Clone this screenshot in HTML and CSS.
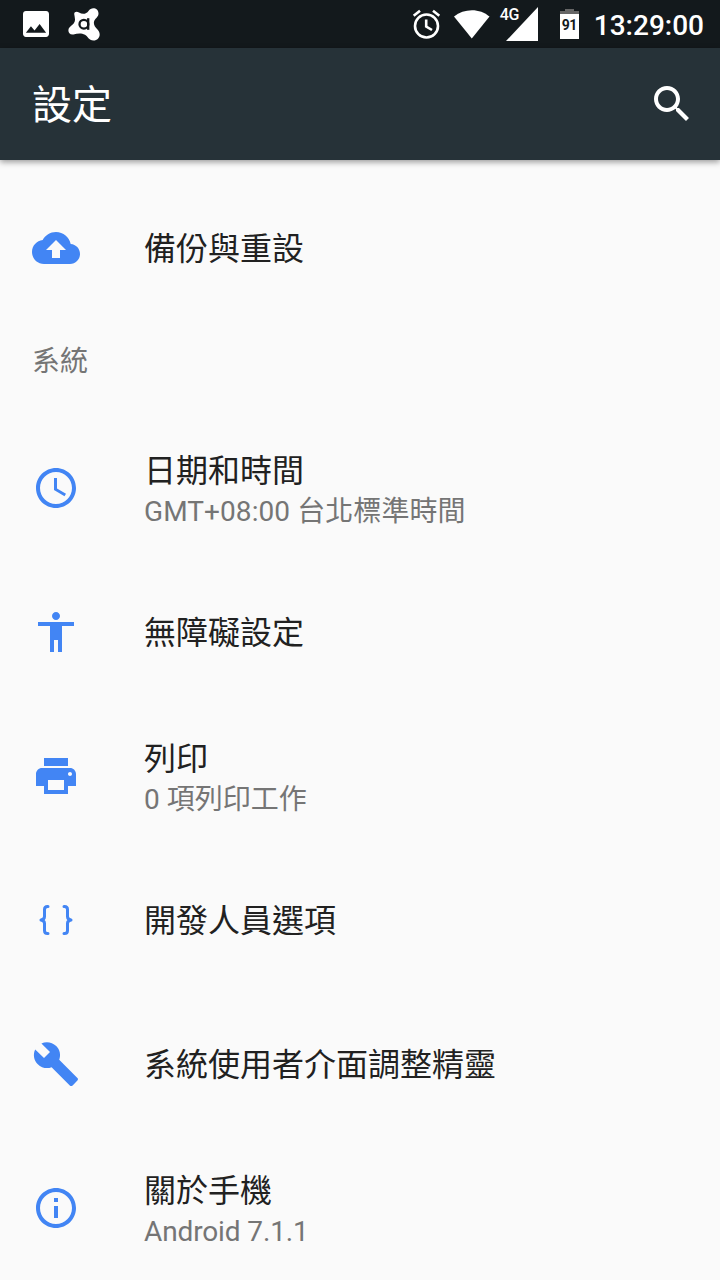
FILE: index.html
```html
<!DOCTYPE html>
<html lang="zh-Hant">
<head>
<meta charset="utf-8">
<title>設定</title>
<link rel="stylesheet" href="styles.css">
</head>
<body>
<div class="screen">
  <div class="status-bar">
    <svg class="status-photo" width="26" height="26" viewBox="3 3 18 18"><path d="M21 19V5c0-1.100-.9-2-2-2H5c-1.100 0-2 .9-2 2v14c0 1.100.9 2 2 2h14c1.100 0 2-.9 2-2zM8.500 13.500l2.500 3.010L14.500 12l4.500 6H5l3.500-4.500z"/></svg>
    <svg class="status-avast" width="32" height="33" viewBox="0 0 32 33"><path d="M6.200 6C6.200 3.500 9 3 11 4.500C14.500 6.800 18.500 6 20.500 3C23.500-1.500 30.500 0 30.500 5.500C30.500 9 27.500 10 26.200 13C25.200 16 26.500 18.500 29.500 21.500C34 26 31 32.500 25.500 32.500C20.500 32.500 20 28.500 17 26.800C13 24.500 9 25.500 5.500 26.500C1.500 27 0 24.500 .5 21.500C1 18.500 4 18 6 15C8 12 6.500 9 6.200 6Z"/><g class="avast-letter"><circle cx="15.900" cy="16.200" r="4.400"/><path d="M20.200 10.200V21.800"/></g></svg>
    <div class="status-space"></div>
    <svg class="status-alarm" width="30" height="30" viewBox="0 0 30 30"><g class="line"><circle cx="14.500" cy="17" r="11.500"/><path d="M14.200 10.500V17.500L20 21M1.700 6.800L8 1.700M21 1.700L27.300 6.800"/></g></svg>
    <svg class="status-wifi" width="36" height="29" viewBox="0 0 36 29"><path d="M0 6.500C10-2 26-2 35.500 6.500L17.800 28.500Z"/></svg>
    <div class="cell"><span class="cell-type">4G</span><svg width="32" height="34" viewBox="0 0 32 34"><path d="M32 0V34H0Z"/></svg></div>
    <div class="battery"><span>91</span></div>
    <div class="clock">13:29:00</div>
  </div>
  <header class="app-bar">
    <h1 class="app-title">設定</h1>
    <svg class="search" width="48" height="48" viewBox="0 0 24 24"><path d="M15.500 14h-.79l-.28-.27C15.410 12.590 16 11.110 16 9.500 16 5.910 13.090 3 9.500 3S3 5.910 3 9.500 5.910 16 9.500 16c1.610 0 3.090-.59 4.230-1.570l.27.28v.79l5 4.990L20.490 19l-4.990-5zm-6 0C7.010 14 5 11.990 5 9.500S7.010 5 9.500 5 14 7.010 14 9.500 11.990 14 9.500 14z"/></svg>
  </header>
  <main class="settings">
    <div class="item">
      <svg class="icon" viewBox="0 0 24 24"><path d="M19.350 10.040C18.670 6.590 15.640 4 12 4 9.110 4 6.600 5.640 5.350 8.040 2.340 8.360 0 10.910 0 14c0 3.310 2.690 6 6 6h13c2.760 0 5-2.240 5-5 0-2.640-2.050-4.780-4.650-4.960zM14 13v4h-4v-4H7l5-5 5 5h-3z"/></svg>
      <div class="label"><div class="name">備份與重設</div></div>
    </div>
    <h2 class="section">系統</h2>
    <div class="item">
      <svg class="icon" viewBox="0 0 24 24"><path d="M11.990 2C6.470 2 2 6.480 2 12s4.470 10 9.990 10C17.520 22 22 17.520 22 12S17.520 2 11.990 2zM12 20c-4.420 0-8-3.580-8-8s3.580-8 8-8 8 3.580 8 8-3.580 8-8 8z"/><path d="M12.500 7H11v6l5.250 3.150.75-1.230-4.500-2.670z"/></svg>
      <div class="label two-line"><div class="name">日期和時間</div><div class="detail timezone">GMT+08:00 台北標準時間</div></div>
    </div>
    <div class="item">
      <svg class="icon" viewBox="0 0 24 24"><path d="M12 2c1.100 0 2 .9 2 2s-.9 2-2 2-2-.9-2-2 .9-2 2-2zm9 7h-6v13h-2v-6h-2v6H9V9H3V7h18v2z"/></svg>
      <div class="label"><div class="name">無障礙設定</div></div>
    </div>
    <div class="item">
      <svg class="icon" viewBox="0 0 24 24"><path d="M19 8H5c-1.660 0-3 1.340-3 3v6h4v4h12v-4h4v-6c0-1.660-1.340-3-3-3zm-3 11H8v-5h8v5zm3-7c-.55 0-1-.45-1-1s.45-1 1-1 1 .45 1 1-.45 1-1 1zm-1-9H6v4h12V3z"/></svg>
      <div class="label two-line"><div class="name">列印</div><div class="detail">0 項列印工作</div></div>
    </div>
    <div class="item">
      <svg class="icon braces" viewBox="0 0 48 48"><path d="M16 10.500H15.500Q12.500 10.500 12.500 13.500V20.500Q12.500 23.500 9 24Q12.500 24.500 12.500 27.500V34.500Q12.500 37.500 15.500 37.500H16M32 10.500H32.500Q35.500 10.500 35.500 13.500V20.500Q35.500 23.500 39 24Q35.500 24.500 35.500 27.500V34.500Q35.500 37.500 32.500 37.500H32"/></svg>
      <div class="label"><div class="name">開發人員選項</div></div>
    </div>
    <div class="item">
      <svg class="icon" viewBox="0 0 24 24"><path d="M22.700 19l-9.100-9.100c.9-2.300.4-5-1.500-6.900-2-2-5-2.400-7.400-1.300L9 6 6 9 1.600 4.700C.4 7.100.9 10.100 2.900 12.100c1.900 1.900 4.600 2.400 6.900 1.500l9.100 9.100c.4.4 1 .4 1.400 0l2.300-2.300c.5-.4.5-1.100.1-1.400z"/></svg>
      <div class="label"><div class="name">系統使用者介面調整精靈</div></div>
    </div>
    <div class="item">
      <svg class="icon" viewBox="0 0 24 24"><path d="M11 17h2v-6h-2v6zm1-15C6.480 2 2 6.480 2 12s4.480 10 10 10 10-4.480 10-10S17.520 2 12 2zm0 18c-4.410 0-8-3.590-8-8s3.590-8 8-8 8 3.590 8 8-3.590 8-8 8zM11 9h2V7h-2v2z"/></svg>
      <div class="label two-line"><div class="name">關於手機</div><div class="detail version">Android 7.1.1</div></div>
    </div>
  </main>
</div>
</body>
</html>
```

FILE: styles.css
```css
* { box-sizing: border-box; }
body {
  margin: 0;
  background: #fafafa;
  font-family: Roboto, "Noto Sans CJK TC", sans-serif;
}
.screen {
  width: 720px;
  height: 1280px;
  overflow: hidden;
  display: flex;
  flex-direction: column;
}
svg { display: block; flex: none; }
.status-bar {
  flex: none;
  height: 48px;
  padding: 0 16px 0 23px;
  display: flex;
  align-items: center;
  background: #13191c;
  color: #fff;
  fill: #fff;
}
.status-avast { margin-left: 19px; }
.avast-letter { fill: none; stroke: #13191c; stroke-width: 2.3; }
.status-space { flex: 1; }
.line { fill: none; stroke: #fff; stroke-width: 2.6; }
.status-alarm { margin-right: 12px; }
.status-wifi { margin-right: 16px; }
.cell {
  position: relative;
  width: 32px;
  margin-right: 22px;
}
.cell-type {
  position: absolute;
  left: -6px;
  top: 0;
  font-size: 16px;
  line-height: 16px;
  font-weight: 500;
  letter-spacing: -.3px;
}
.battery {
  width: 19px;
  height: 30px;
  margin-right: 15px;
  padding-top: 5px;
  background:
    linear-gradient(#666, #666) 5px 0 / 9px 2px no-repeat,
    linear-gradient(#666 3px, #fff 3px) 0 2px / 19px 28px no-repeat;
  color: #13191c;
  font-size: 14px;
  line-height: 22px;
  font-weight: 700;
  letter-spacing: -.5px;
  text-align: center;
}
.clock {
  font-size: 28px;
  line-height: 48px;
  font-weight: 500;
  padding-top: 3px;
}
.app-bar {
  flex: none;
  height: 112px;
  padding: 0 24px 0 32px;
  display: flex;
  align-items: center;
  justify-content: space-between;
  background: #263238;
  color: #fff;
  fill: #fff;
  box-shadow: 0 2px 6px rgba(0, 0, 0, .4);
}
.app-title {
  margin: 0;
  padding-top: 4px;
  font-size: 40px;
  line-height: 56px;
  font-weight: 400;
}
.settings { padding-top: 16px; }
.item {
  height: 144px;
  padding-left: 32px;
  display: flex;
  align-items: center;
  gap: 64px;
}
.icon { width: 48px; height: 48px; fill: #4285f4; }
.braces {
  fill: none;
  stroke: #4285f4;
  stroke-width: 3;
  stroke-linecap: round;
  stroke-linejoin: round;
}
.label { padding-top: 2px; }
.two-line { padding-top: 4px; }
.name { font-size: 32px; line-height: 43px; color: #212121; }
.detail { font-size: 28px; line-height: 38px; color: #757575; }
.timezone { letter-spacing: .08px; }
.version { letter-spacing: -.12px; }
.section {
  height: 96px;
  margin: 0;
  padding: 22px 32px 0;
  font-size: 28px;
  line-height: 40px;
  font-weight: 400;
  color: #757575;
}
```
